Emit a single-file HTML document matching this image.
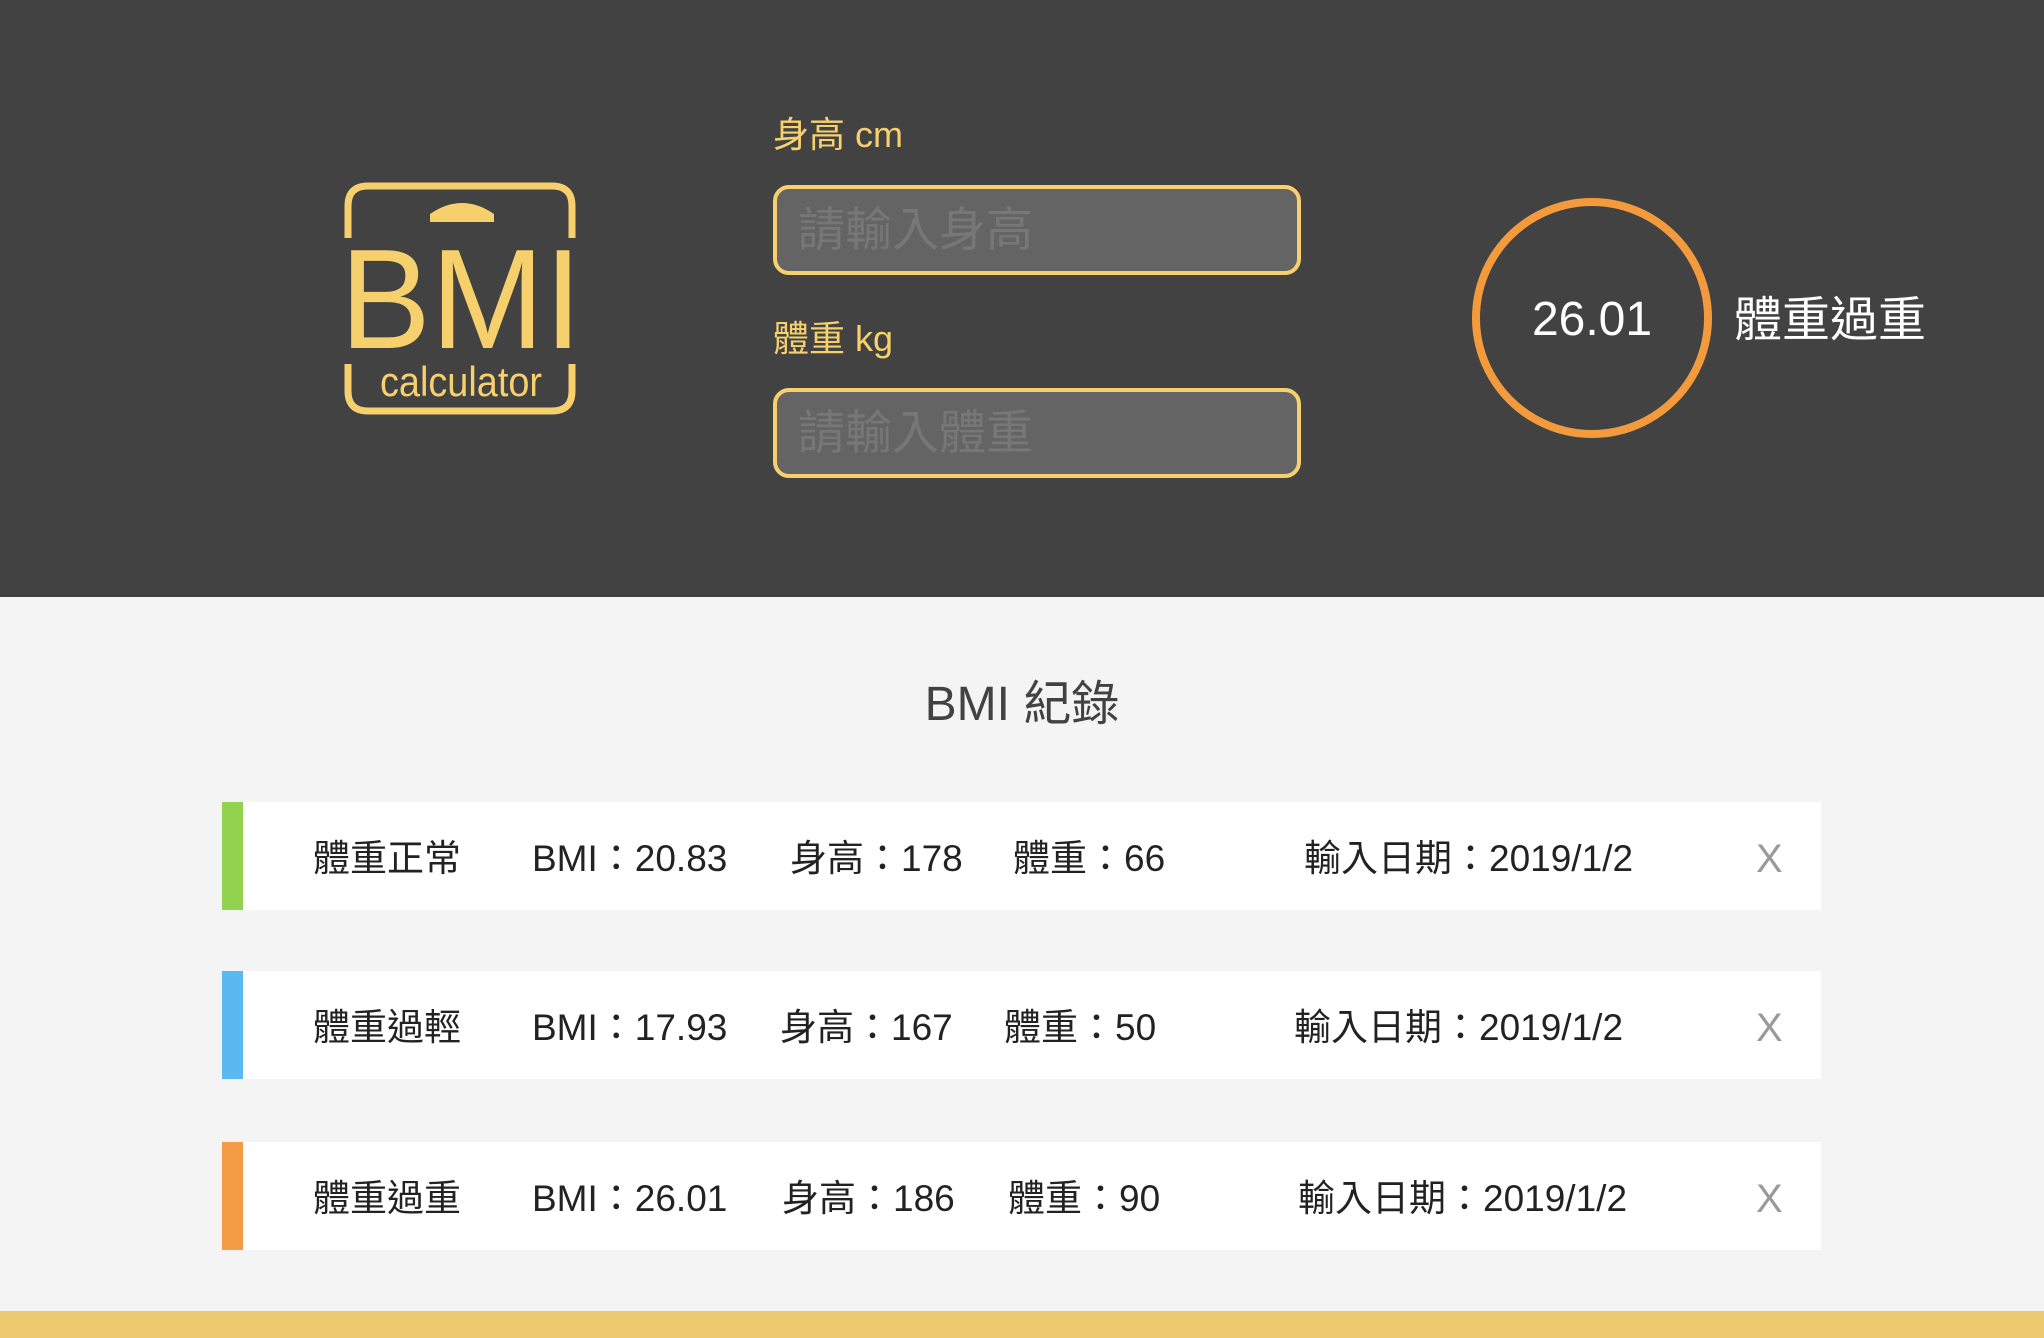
<!DOCTYPE html>
<html><head><meta charset="utf-8"><style>
*{margin:0;padding:0;box-sizing:border-box}
body{width:2044px;height:1338px;background:#f4f4f4;font-family:"Liberation Sans","Noto Sans CJK TC",sans-serif;position:relative;overflow:hidden}
.hd{position:absolute;left:0;top:0;width:2044px;height:597px;background:#424242}
.abs{position:absolute;white-space:nowrap}
.lbl{color:#f7d06e;font-size:36px;line-height:40px}
.inp{position:absolute;left:773px;width:528px;height:90px;border:4px solid #f7d06e;border-radius:16px;background:#646464;color:#777;font-size:47px;line-height:82px;padding-left:21px}
.circ{position:absolute;left:1472px;top:198px;width:240px;height:240px;border:8px solid #f39b3c;border-radius:50%;color:#fff;font-size:48px;text-align:center;line-height:228px}
.row{position:absolute;left:222px;width:1599px;height:108px;background:#fff}
.row .bar{position:absolute;left:0;top:0;width:21px;height:108px}
.row .t{position:absolute;top:0;line-height:114px;font-size:37px;color:#222}
.row .x{color:#9a9a9a;font-size:40px}
</style></head><body>
<div class="hd"></div>
<svg class="abs" style="left:340px;top:178px" width="242" height="242" viewBox="0 0 242 242">
<g fill="none" stroke="#f7d06e" stroke-width="7">
<path d="M8 60 V28 Q8 8 28 8 H212 Q232 8 232 28 V60"/>
<path d="M8 186 V213 Q8 233 28 233 H212 Q232 233 232 213 V186"/>
</g>
<path d="M90 44 V36 Q122 14 154 36 V44Z" fill="#f7d06e"/>
<text x="0" y="170" fill="#f7d06e" font-family="Liberation Sans,sans-serif" font-size="142" textLength="242" lengthAdjust="spacingAndGlyphs">BMI</text>
<text x="40" y="218" fill="#f7d06e" font-family="Liberation Sans Narrow,Liberation Sans,sans-serif" font-size="42" textLength="162" lengthAdjust="spacingAndGlyphs">calculator</text>
</svg>
<div class="abs lbl" style="left:773px;top:115px">身高 cm</div>
<div class="inp" style="top:185px">請輸入身高</div>
<div class="abs lbl" style="left:773px;top:319px">體重 kg</div>
<div class="inp" style="top:388px">請輸入體重</div>
<div class="circ">26.01</div>
<div class="abs" style="left:1734px;top:293px;color:#fff;font-size:48px;line-height:56px">體重過重</div>
<div class="abs" style="left:0;width:2044px;text-align:center;top:677px;color:#424242;font-size:48px;line-height:56px">BMI 紀錄</div>

<div class="row" style="top:802px"><div class="bar" style="background:#93d24f"></div>
<span class="t" style="left:91px">體重正常</span><span class="t" style="left:310px">BMI：20.83</span><span class="t" style="left:568px">身高：178</span><span class="t" style="left:791px">體重：66</span><span class="t" style="left:1082px">輸入日期：2019/1/2</span><span class="t x" style="left:1534px">X</span></div>

<div class="row" style="top:971px"><div class="bar" style="background:#5bb8f0"></div>
<span class="t" style="left:91px">體重過輕</span><span class="t" style="left:310px">BMI：17.93</span><span class="t" style="left:558px">身高：167</span><span class="t" style="left:782px">體重：50</span><span class="t" style="left:1072px">輸入日期：2019/1/2</span><span class="t x" style="left:1534px">X</span></div>

<div class="row" style="top:1142px"><div class="bar" style="background:#f39b45"></div>
<span class="t" style="left:91px">體重過重</span><span class="t" style="left:310px">BMI：26.01</span><span class="t" style="left:560px">身高：186</span><span class="t" style="left:786px">體重：90</span><span class="t" style="left:1076px">輸入日期：2019/1/2</span><span class="t x" style="left:1534px">X</span></div>

<div class="abs" style="left:0;top:1311px;width:2044px;height:27px;background:#edc96f"></div>
</body></html>
